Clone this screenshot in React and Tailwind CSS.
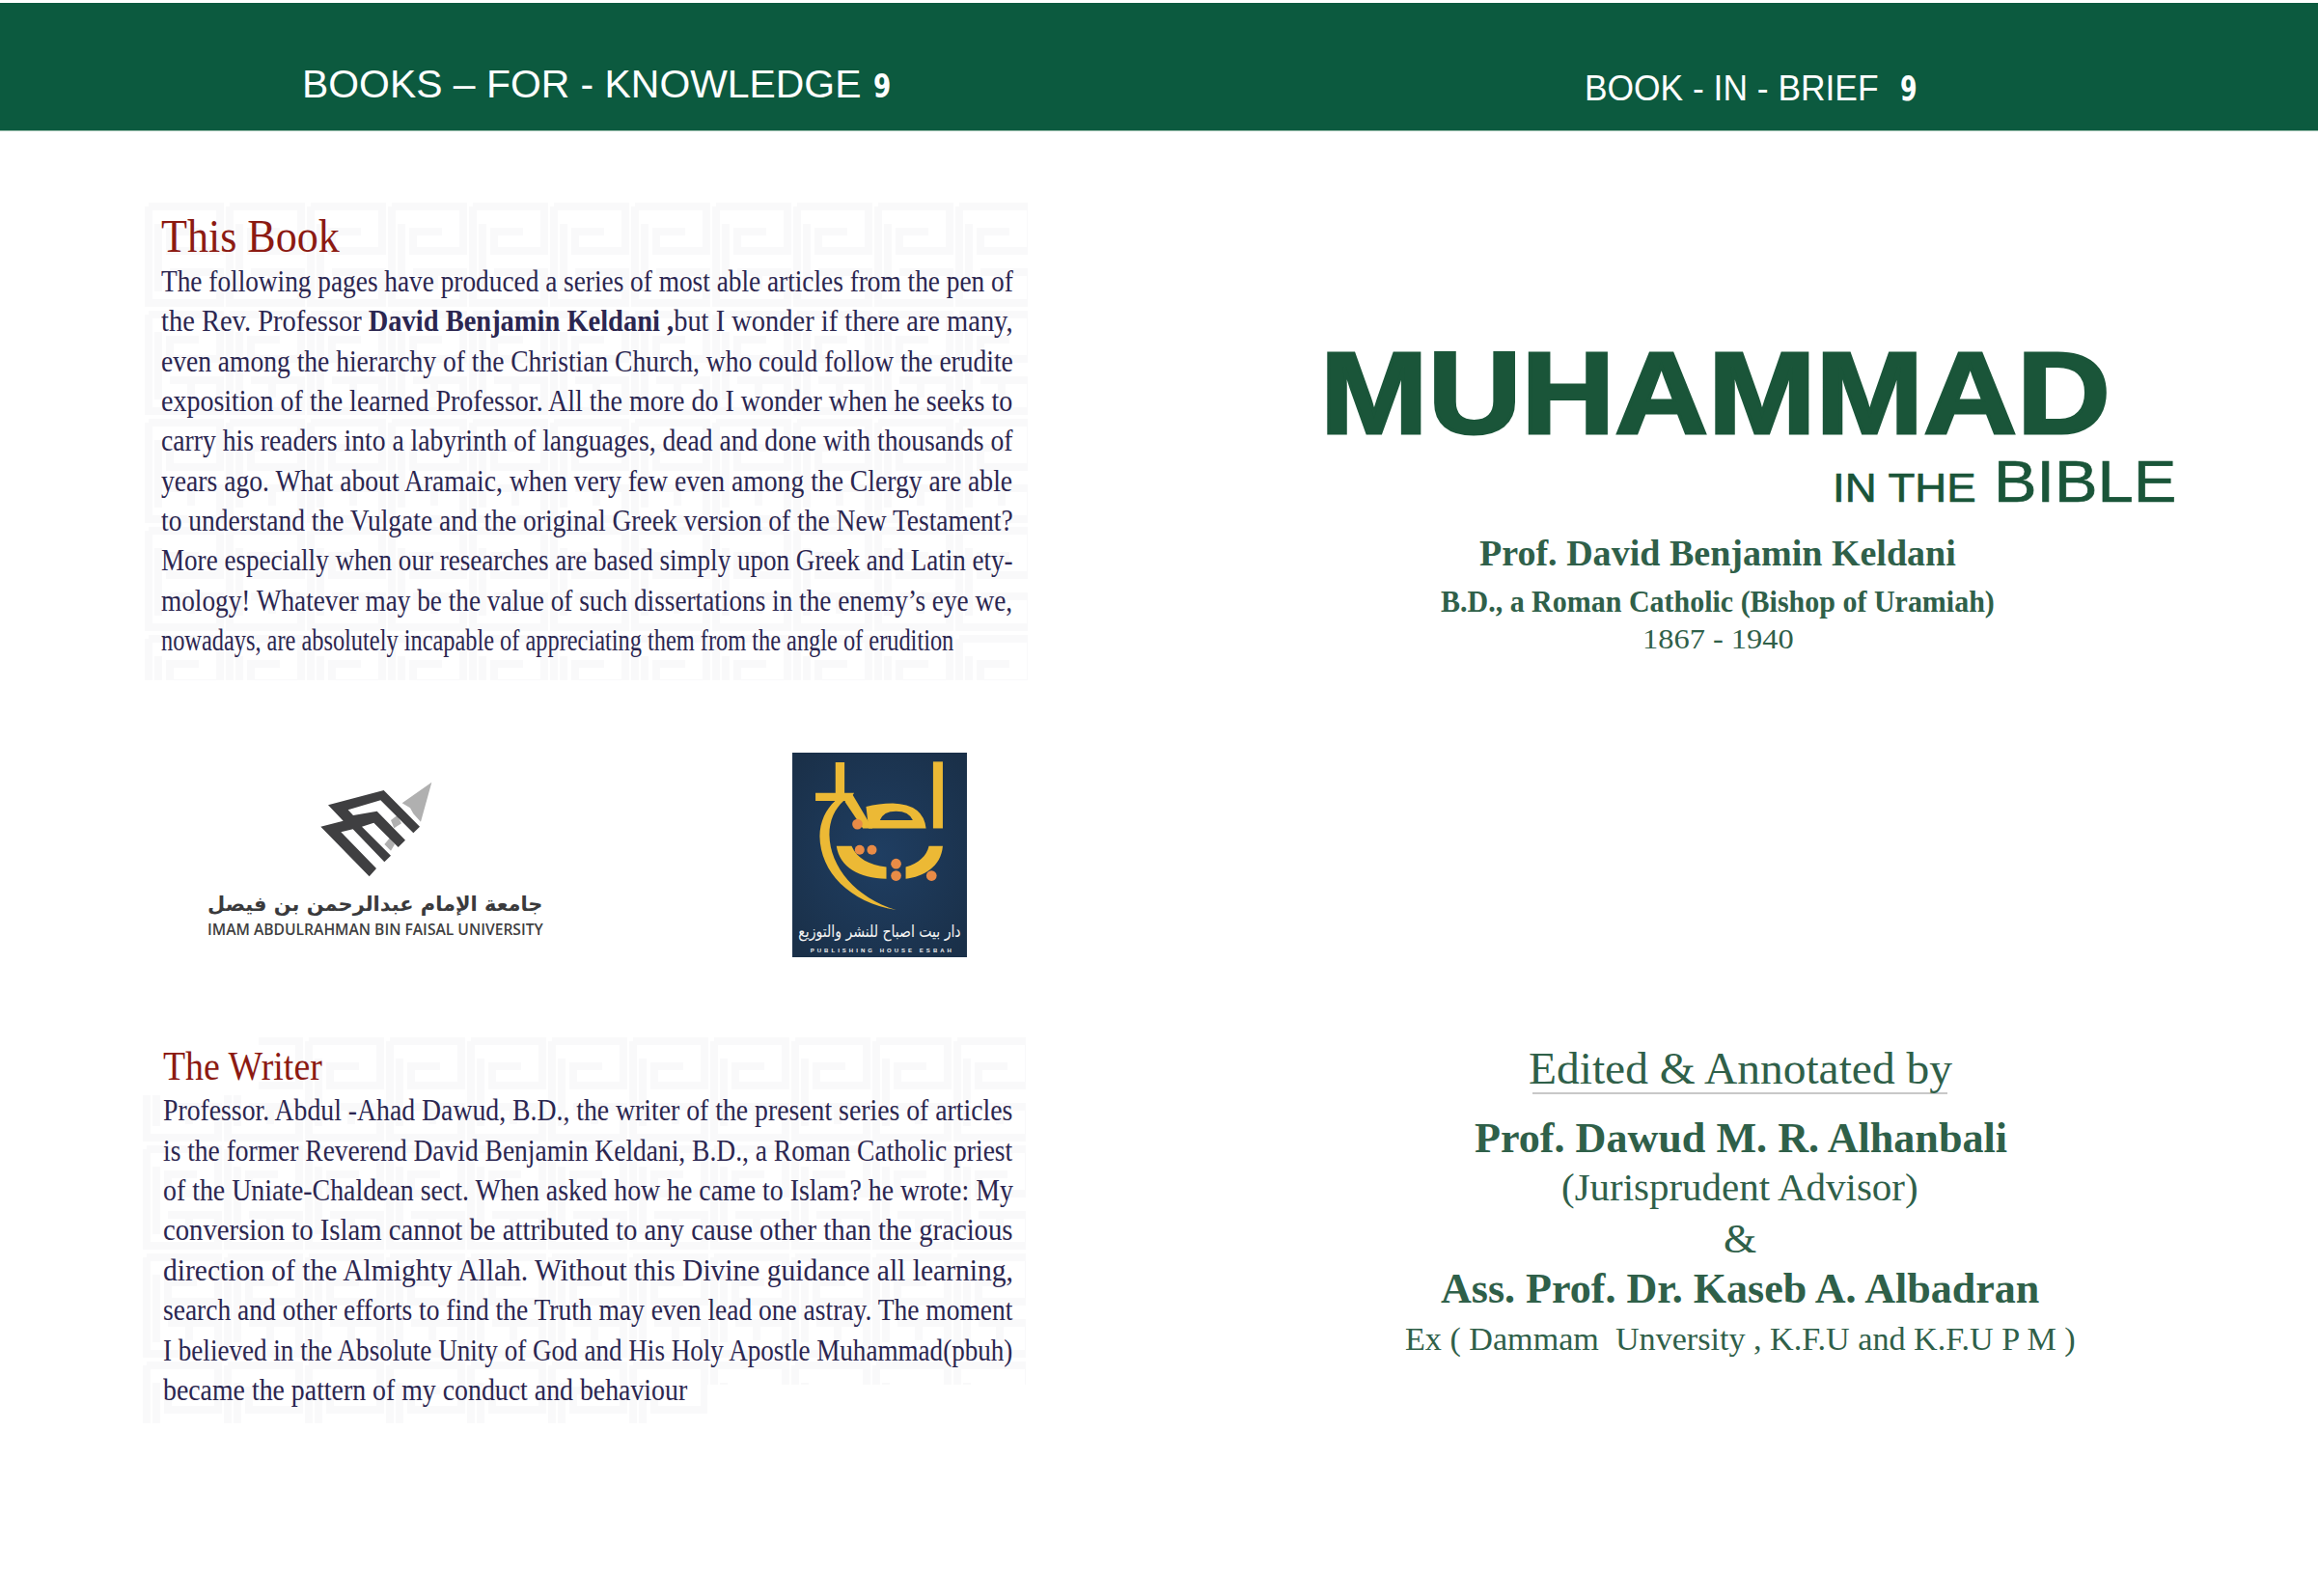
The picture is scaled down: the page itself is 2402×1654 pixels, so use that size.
import React, { useLayoutEffect, useRef, useState } from "react";

function Fit({ className = "", children }) {
  const outer = useRef(null);
  const inner = useRef(null);
  const [scale, setScale] = useState(1);
  useLayoutEffect(() => {
    const natural = inner.current.offsetWidth;
    const target = outer.current.clientWidth;
    if (natural > 0) setScale((target - 0.5) / natural);
  }, []);
  return (
    <div ref={outer} className={className}>
      <span
        ref={inner}
        className="inline-block whitespace-nowrap origin-left"
        style={{ transform: `scaleX(${scale})` }}
      >
        {children}
      </span>
    </div>
  );
}

const SERIF = "font-['Liberation_Serif',serif]";
const SANS = "font-['Liberation_Sans',sans-serif]";
const BODY = `${SERIF} text-[32px] leading-[41.35px] text-[#2b2650]`;

function Watermark({ id, children, className }) {
  return (
    <svg className={className} aria-hidden="true">
      <defs>
        <pattern id={id} width="84" height="112" patternUnits="userSpaceOnUse">
          <path
            d="M4 4H78V50H26V30H56M4 4V104H78V72H26M48 72V90M14 22V92"
            fill="none"
            stroke="#f9f9fa"
            strokeWidth="8"
          />
        </pattern>
      </defs>
      {children}
    </svg>
  );
}

function UniversityMark() {
  return (
    <svg viewBox="0 0 600 360" className="w-[200px] h-[120px] block">
      <path
        d="M350 97L442 32L408 155L385 130L375 112ZM315 150L335 135L348 160L325 175ZM295 225L312 205L327 225L315 245Z"
        fill="#b0b0b0"
      />
      <path
        d="M97 170L167 152L120 103L293 57L405 170L385 190L283 88L182 118L198 135L272 122L360 212L338 234L262 158L225 170L315 260L295 280L197 178L160 187L270 300L248 325Z"
        fill="#3f3f41"
      />
    </svg>
  );
}

function PublisherLogo() {
  return (
    <svg viewBox="63 30 542 635" className="w-[181px] h-[212px] block">
      <defs>
        <radialGradient id="pub" cx="50%" cy="50%" r="65%">
          <stop offset="0%" stopColor="#1f3e62" />
          <stop offset="100%" stopColor="#1a3049" />
        </radialGradient>
      </defs>
      <rect x="63" y="30" width="542" height="635" fill="url(#pub)" />
      <g fill="#ecb935">
        <rect x="500" y="58" width="30" height="207" />
        <path d="M197 60H225V155H255L238 180H135V155H197Z" />
        <path d="M196 180H222C195 205 178 240 178 285C180 385 260 480 385 518C240 495 150 400 148 290C148 245 168 205 196 180Z" />
        <path d="M226 182L250 160L312 265H282Z" />
        <path
          fillRule="evenodd"
          d="M292 198Q330 187 375 187Q470 190 478 265H300ZM335 240Q345 212 385 212Q425 212 437 240Z"
        />
        <path d="M200 320H247C265 360 300 378 355 385V422C270 420 210 385 200 320Z" />
        <path d="M415 385C455 375 480 350 487 320H530C525 385 470 415 415 422Z" />
      </g>
      <g fill="#e98b46">
        <circle cx="265" cy="252" r="16" />
        <circle cx="272" cy="332" r="15" />
        <circle cx="310" cy="332" r="15" />
        <circle cx="385" cy="375" r="16" />
        <circle cx="385" cy="412" r="16" />
        <circle cx="495" cy="412" r="16" />
      </g>
      <text
        x="334"
        y="603"
        textAnchor="middle"
        textLength="504"
        lengthAdjust="spacingAndGlyphs"
        fill="#f4f4f4"
        fontSize="52"
        fontFamily="'DejaVu Sans', sans-serif"
      >
        دار بيت اصباح للنشر والتوزيع
      </text>
      <text
        x="338"
        y="650"
        textAnchor="middle"
        textLength="438"
        fill="#f0f0f0"
        fontSize="18"
        fontWeight="700"
        fontFamily="'Liberation Sans', sans-serif"
      >
        PUBLISHING HOUSE ESBAH
      </text>
    </svg>
  );
}

const bookLines = [
  ["The following pages have produced a series of most able articles from the pen of"],
  ["the Rev. Professor ", <b key="b">David Benjamin Keldani ,</b>, "but I wonder if there are many,"],
  ["even among the hierarchy of the Christian Church, who could follow the erudite"],
  ["exposition of the learned Professor. All the more do I wonder when he seeks to"],
  ["carry his readers into a labyrinth of languages, dead and done with thousands of"],
  ["years ago. What about Aramaic, when very few even among the Clergy are able"],
  ["to understand the Vulgate and the original Greek version of the New Testament?"],
  ["More especially when our researches are based simply upon Greek and Latin ety-"],
  ["mology! Whatever may be the value of such dissertations in the enemy’s eye we,"],
];

const writerLines = [
  "Professor. Abdul -Ahad Dawud, B.D., the writer of the present series of articles",
  "is the former Reverend David Benjamin Keldani, B.D., a Roman Catholic priest",
  "of the Uniate-Chaldean sect. When asked how he came to Islam?  he wrote: My",
  "conversion to Islam cannot be attributed to any cause other than the gracious",
  "direction of the Almighty Allah. Without this Divine guidance all learning,",
  "search and other efforts to find the Truth may even lead one astray. The moment",
  "I believed in the Absolute Unity of God and His Holy Apostle Muhammad(pbuh)",
];

const GREEN = "text-[#2f6049]";

export default function App() {
  return (
    <div className="w-[2402px] h-[1654px] bg-white overflow-hidden flex flex-col">
      <header className="mt-[3px] h-[133px] shrink-0 bg-[#0c5a3f] border-b border-[#8fb8a5] flex text-white">
        <div className={`w-[1201px] pl-[313px] pt-[60px] flex items-baseline ${SANS}`}>
          <Fit className="w-[580px] text-[41px] leading-[48px]">BOOKS – FOR - KNOWLEDGE</Fit>
          <Fit className="ml-[12px] w-[19px] font-['DejaVu_Sans',sans-serif] font-bold text-[34px] leading-[48px]">9</Fit>
        </div>
        <div className={`flex-1 pl-[441px] pt-[65px] flex items-baseline ${SANS}`}>
          <Fit className="w-[305px] text-[36px] leading-[48px]">BOOK - IN - BRIEF</Fit>
          <Fit className="ml-[22px] w-[18px] font-['DejaVu_Sans',sans-serif] font-bold text-[36px] leading-[48px]">9</Fit>
        </div>
      </header>

      <main className="flex flex-1">
        <section className="w-[1201px] pl-[167px] pt-[83px] shrink-0">
          <div className="relative">
            <Watermark id="wm1" className="absolute left-[-17px] top-[-9px] w-[915px] h-[495px]">
              <rect width="915" height="495" fill="url(#wm1)" />
            </Watermark>
            <div className="relative">
              <Fit className={`w-[185px] ${SERIF} text-[48px] leading-[52px] text-[#8c1a12]`}>This Book</Fit>
              {bookLines.map((line, i) => (
                <Fit key={i} className={`w-[883px] ${BODY}`}>{line}</Fit>
              ))}
              <Fit className={`w-[822px] ${BODY}`}>
                nowadays, are absolutely incapable of appreciating them from the angle of erudition
              </Fit>
            </div>
          </div>

          <div className="flex mt-[96px] h-[212px]">
            <div className="w-[348px] ml-[48px] pt-[20px]">
              <div className="ml-[85px]">
                <UniversityMark />
              </div>
              <Fit className="w-[348px] mt-[4px] text-right font-['DejaVu_Sans',sans-serif] font-bold text-[21px] leading-[26px] text-[#3a3a3c]">
                <span dir="rtl">جامعة الإمام عبدالرحمن بن فيصل</span>
              </Fit>
              <Fit className="w-[348px] mt-[4px] font-['Open_Sans',sans-serif] font-semibold text-[16px] leading-[18px] text-[#3f3f41]">
                IMAM ABDULRAHMAN BIN FAISAL UNIVERSITY
              </Fit>
            </div>
            <div className="ml-[258px]">
              <PublisherLogo />
            </div>
          </div>

          <div className="relative mt-[89px]">
            <Watermark id="wm2" className="absolute left-[-19px] top-[-6px] w-[915px] h-[400px]">
              <rect x="120" width="795" height="60" fill="url(#wm2)" />
              <rect y="60" width="915" height="300" fill="url(#wm2)" />
              <rect y="360" width="585" height="40" fill="url(#wm2)" />
            </Watermark>
            <div className="relative">
              <Fit className={`w-[165px] ml-[2px] mb-[1px] ${SERIF} text-[43px] leading-[48px] text-[#8c1a12]`}>The Writer</Fit>
              {writerLines.map((line, i) => (
                <Fit key={i} className={`w-[881px] ml-[2px] ${BODY}`}>{line}</Fit>
              ))}
              <Fit className={`w-[544px] ml-[2px] ${BODY}`}>became the pattern of my conduct and behaviour</Fit>
            </div>
          </div>
        </section>

        <section className="flex-1 pl-[167px] pt-[211px]">
          <Fit className={`w-[819px] ${SANS} font-bold text-[121px] leading-none text-[#1a5539] [-webkit-text-stroke:3px_#1a5539]`}>MUHAMMAD</Fit>
          <div className={`flex items-baseline ml-[531px] ${SANS} text-[#1a5539] leading-none [-webkit-text-stroke:0.7px_#1a5539]`}>
            <Fit className="w-[149px] text-[43px]">IN THE</Fit>
            <Fit className="w-[190px] ml-[18px] text-[62px]">BIBLE</Fit>
          </div>
          <div className={`pl-[2px] ${SERIF} ${GREEN}`}>
            <Fit className="w-[494px] ml-[163px] mt-[26px] font-bold text-[38px] leading-[35px]">Prof. David Benjamin Keldani</Fit>
            <Fit className="w-[574px] ml-[123px] mt-[19px] font-bold text-[31px] leading-[28px]">B.D., a Roman Catholic (Bishop of Uramiah)</Fit>
            <Fit className="w-[157px] ml-[332px] mt-[11px] text-[29px] leading-[27px]">1867 - 1940</Fit>

            <Fit className="w-[439px] ml-[214px] mt-[410px] text-[46px] leading-[43px]">Edited &amp; Annotated by</Fit>
            <div className="w-[430px] h-[2px] ml-[218px] mt-[3px] bg-[#c8c8c8]" />
            <Fit className="w-[553px] ml-[158px] mt-[26px] font-bold text-[44px] leading-[40px]">Prof. Dawud M. R. Alhanbali</Fit>
            <Fit className="w-[370px] ml-[248px] mt-[13px] text-[40px] leading-[36px]">(Jurisprudent Advisor)</Fit>
            <Fit className="w-[35px] ml-[416px] mt-[14px] text-[42px] leading-[42px]">&amp;</Fit>
            <Fit className="w-[621px] ml-[123px] mt-[11px] font-bold text-[44px] leading-[40px]">Ass. Prof. Dr. Kaseb A. Albadran</Fit>
            <Fit className="w-[695px] ml-[86px] mt-[16px] text-[34px] leading-[31px]"><span className="whitespace-pre">{"Ex ( Dammam  Unversity , K.F.U and K.F.U P M )"}</span></Fit>
          </div>
        </section>
      </main>
    </div>
  );
}
